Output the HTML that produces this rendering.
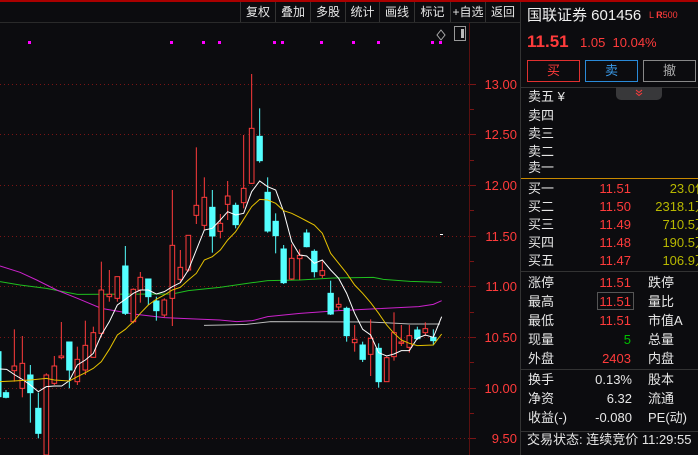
<!DOCTYPE html>
<html><head><meta charset="utf-8"><style>
*{margin:0;padding:0;box-sizing:border-box}
body{width:698px;height:455px;background:#0c0c0f;overflow:hidden;position:relative;font-family:"Liberation Sans","Noto Sans CJK SC",sans-serif;color:#e6e6e6}
.a{position:absolute;white-space:nowrap}
.tb{position:absolute;top:2px;height:20px;font-size:12px;line-height:20px;text-align:center;border-left:1px solid #333;color:#e6e6e6}
.r{font-size:13px;line-height:18px}
.red{color:#ff3b3b}.ol{color:#b8b800}
</style></head><body>
<div class="a" style="left:0;top:0;width:698px;height:2px;background:#a00"></div>
<div class="a" style="left:0;top:22px;width:520px;height:1px;background:#2a2a2a"></div>
<div class="tb" style="left:240px;width:35px">复权</div>
<div class="tb" style="left:275px;width:35px">叠加</div>
<div class="tb" style="left:310px;width:35px">多股</div>
<div class="tb" style="left:345px;width:34px">统计</div>
<div class="tb" style="left:379px;width:35px">画线</div>
<div class="tb" style="left:414px;width:36px">标记</div>
<div class="tb" style="left:450px;width:35px">+自选</div>
<div class="tb" style="left:485px;width:35px">返回</div>
<div class="a" style="left:520px;top:2px;width:1px;height:453px;background:#333"></div>

<svg class="a" style="left:0;top:0" width="520" height="455">
<g fill="#ff00ff"><rect x="28" y="41" width="3" height="3"/><rect x="170" y="41" width="3" height="3"/><rect x="202" y="41" width="3" height="3"/><rect x="218" y="41" width="3" height="3"/><rect x="273" y="41" width="3" height="3"/><rect x="281" y="41" width="3" height="3"/><rect x="320" y="41" width="3" height="3"/><rect x="352" y="41" width="3" height="3"/><rect x="377" y="41" width="3" height="3"/><rect x="431" y="41" width="3" height="3"/><rect x="439" y="41" width="3" height="3"/></g>
<path d="M441 30 L445 35 L441 40 L437 35 Z" fill="none" stroke="#aaa" stroke-width="1"/>
<rect x="454.5" y="26.5" width="11" height="14" fill="none" stroke="#999"/><rect x="461" y="29" width="3" height="9" fill="#bbb"/>
<line x1="469.5" y1="23" x2="469.5" y2="455" stroke="#5a1010"/>
<g stroke="#7a1515" stroke-dasharray="1,3">
<line x1="0" y1="84.5" x2="469" y2="84.5"/><line x1="0" y1="134.5" x2="469" y2="134.5"/><line x1="0" y1="185.5" x2="469" y2="185.5"/><line x1="0" y1="236.5" x2="469" y2="236.5"/><line x1="0" y1="286.5" x2="469" y2="286.5"/><line x1="0" y1="337.5" x2="469" y2="337.5"/><line x1="0" y1="388.5" x2="469" y2="388.5"/><line x1="0" y1="438.5" x2="469" y2="438.5"/></g>
<g stroke="#7a1515"><line x1="470" y1="84.5" x2="476" y2="84.5"/><line x1="470" y1="109.5" x2="474" y2="109.5"/><line x1="470" y1="134.5" x2="476" y2="134.5"/><line x1="470" y1="160.5" x2="474" y2="160.5"/><line x1="470" y1="185.5" x2="476" y2="185.5"/><line x1="470" y1="210.5" x2="474" y2="210.5"/><line x1="470" y1="236.5" x2="476" y2="236.5"/><line x1="470" y1="261.5" x2="474" y2="261.5"/><line x1="470" y1="286.5" x2="476" y2="286.5"/><line x1="470" y1="312.5" x2="474" y2="312.5"/><line x1="470" y1="337.5" x2="476" y2="337.5"/><line x1="470" y1="362.5" x2="474" y2="362.5"/><line x1="470" y1="388.5" x2="476" y2="388.5"/><line x1="470" y1="413.5" x2="474" y2="413.5"/><line x1="470" y1="438.5" x2="476" y2="438.5"/></g>
<g fill="#ff3b3b" font-size="13" font-family="Liberation Sans,sans-serif" text-anchor="end">
<text x="517" y="89">13.00</text><text x="517" y="139">12.50</text><text x="517" y="190">12.00</text><text x="517" y="241">11.50</text><text x="517" y="291">11.00</text><text x="517" y="342">10.50</text><text x="517" y="393">10.00</text><text x="517" y="443">9.50</text></g>
<rect x="440" y="234" width="3" height="1" fill="#fff"/>
<g transform="translate(0,60) scale(0.33333)">
<g fill="none" stroke-width="3">
<polyline stroke="#1fbf1f" points="0,665 60,675 139,685 232,703 517,702 565,692 659,682 757,668 803,662 900,660 1000,654 1120,652 1150,658 1230,664 1325,667"/>
<polyline stroke="#cc22cc" points="0,618 60,637 110,660 170,690 232,715 304,745 400,762 493,773 560,776 659,780 710,785 757,782 803,770 900,760 1016,752 1136,746 1256,740 1300,733 1325,722"/>
<polyline stroke="#bbb" points="612,796 670,795 740,793 812,785 1110,786 1230,792 1320,792"/>
</g>
<g stroke-width="3">
<g stroke="#54ffff" fill="#54ffff">
<rect x="-4" y="875" width="7" height="135"/>
<line x1="18" y1="990" x2="18" y2="1015"/><rect x="10" y="998" width="16" height="14"/>
<line x1="91" y1="915" x2="91" y2="1088"/><rect x="83" y="945" width="16" height="53"/>
<line x1="115" y1="998" x2="115" y2="1135"/><rect x="107" y="1045" width="16" height="75"/>
<line x1="208" y1="846" x2="208" y2="985"/><rect x="200" y="846" width="16" height="84"/>
<line x1="376" y1="558" x2="376" y2="765"/><rect x="368" y="618" width="16" height="142"/>
<line x1="445" y1="657" x2="445" y2="735"/><rect x="437" y="657" width="16" height="53"/>
<line x1="469" y1="710" x2="469" y2="782"/><rect x="461" y="723" width="16" height="29"/>
<line x1="637" y1="390" x2="637" y2="578"/><rect x="629" y="442" width="16" height="86"/>
<line x1="707" y1="428" x2="707" y2="505"/><rect x="699" y="436" width="16" height="58"/>
<line x1="779" y1="145" x2="779" y2="308"/><rect x="771" y="229" width="16" height="73"/>
<line x1="803" y1="352" x2="803" y2="518"/><rect x="795" y="397" width="16" height="116"/>
<line x1="827" y1="460" x2="827" y2="580"/><rect x="819" y="484" width="16" height="43"/>
<line x1="851" y1="555" x2="851" y2="672"/><rect x="843" y="567" width="16" height="101"/>
<line x1="920" y1="508" x2="920" y2="562"/><rect x="912" y="519" width="16" height="41"/>
<line x1="943" y1="568" x2="943" y2="652"/><rect x="935" y="574" width="16" height="61"/>
<line x1="992" y1="662" x2="992" y2="765"/><rect x="984" y="700" width="16" height="62"/>
<line x1="1040" y1="740" x2="1040" y2="845"/><rect x="1032" y="745" width="16" height="82"/>
<line x1="1088" y1="845" x2="1088" y2="906"/><rect x="1080" y="855" width="16" height="43"/>
<line x1="1136" y1="850" x2="1136" y2="983"/><rect x="1128" y="865" width="16" height="100"/>
<line x1="1252" y1="800" x2="1252" y2="840"/><rect x="1244" y="810" width="16" height="26"/>
<line x1="1300" y1="808" x2="1300" y2="855"/><rect x="1292" y="832" width="16" height="10"/>
</g>
<g stroke="#ff3b3b" fill="#0c0c0f">
<line x1="43" y1="808" x2="43" y2="965"/><rect x="36" y="918" width="14" height="14"/>
<line x1="67" y1="828" x2="67" y2="1012"/><rect x="60" y="910" width="14" height="75"/>
<line x1="139" y1="940" x2="139" y2="1185"/><rect x="132" y="945" width="14" height="240"/>
<line x1="163" y1="888" x2="163" y2="975"/><rect x="156" y="918" width="14" height="52"/>
<line x1="184" y1="786" x2="184" y2="898"/><rect x="177" y="888" width="14" height="5"/>
<line x1="232" y1="860" x2="232" y2="975"/><rect x="225" y="898" width="14" height="67"/>
<line x1="256" y1="782" x2="256" y2="945"/><rect x="249" y="856" width="14" height="74"/>
<line x1="280" y1="800" x2="280" y2="892"/><rect x="273" y="818" width="14" height="74"/>
<line x1="304" y1="605" x2="304" y2="832"/><rect x="297" y="690" width="14" height="130"/>
<line x1="328" y1="630" x2="328" y2="725"/><rect x="321" y="703" width="14" height="7"/>
<line x1="352" y1="650" x2="352" y2="725"/><rect x="345" y="650" width="14" height="65"/>
<line x1="400" y1="685" x2="400" y2="790"/><rect x="393" y="688" width="14" height="97"/>
<line x1="421" y1="636" x2="421" y2="728"/><rect x="414" y="652" width="14" height="38"/>
<line x1="493" y1="715" x2="493" y2="772"/><rect x="486" y="720" width="14" height="45"/>
<line x1="517" y1="390" x2="517" y2="798"/><rect x="510" y="556" width="14" height="159"/>
<line x1="541" y1="570" x2="541" y2="665"/><rect x="534" y="622" width="14" height="36"/>
<line x1="565" y1="526" x2="565" y2="635"/><rect x="558" y="526" width="14" height="104"/>
<line x1="589" y1="262" x2="589" y2="492"/><rect x="582" y="436" width="14" height="30"/>
<line x1="613" y1="352" x2="613" y2="510"/><rect x="606" y="412" width="14" height="84"/>
<line x1="661" y1="462" x2="661" y2="535"/><rect x="654" y="490" width="14" height="24"/>
<line x1="683" y1="363" x2="683" y2="480"/><rect x="676" y="408" width="14" height="25"/>
<line x1="731" y1="225" x2="731" y2="445"/><rect x="724" y="385" width="14" height="43"/>
<line x1="755" y1="42" x2="755" y2="372"/><rect x="748" y="205" width="14" height="165"/>
<line x1="875" y1="553" x2="875" y2="660"/><rect x="868" y="595" width="14" height="62"/>
<line x1="899" y1="568" x2="899" y2="660"/><rect x="892" y="586" width="14" height="10"/>
<line x1="967" y1="604" x2="967" y2="654"/><rect x="960" y="632" width="14" height="14"/>
<line x1="1016" y1="712" x2="1016" y2="750"/><rect x="1009" y="733" width="14" height="8"/>
<line x1="1064" y1="795" x2="1064" y2="875"/><rect x="1057" y="838" width="14" height="10"/>
<line x1="1112" y1="778" x2="1112" y2="948"/><rect x="1105" y="835" width="14" height="48"/>
<line x1="1160" y1="890" x2="1160" y2="965"/><rect x="1153" y="893" width="14" height="72"/>
<line x1="1182" y1="757" x2="1182" y2="902"/><rect x="1175" y="818" width="14" height="72"/>
<line x1="1204" y1="795" x2="1204" y2="858"/><rect x="1197" y="846" width="14" height="4"/>
<line x1="1228" y1="795" x2="1228" y2="878"/><rect x="1221" y="827" width="14" height="35"/>
<line x1="1276" y1="787" x2="1276" y2="828"/><rect x="1269" y="806" width="14" height="12"/>
</g></g>
<g fill="none" stroke-width="3">
<polyline stroke="#ffffff" points="0,927 20,928 45,945 70,960 91,975 115,995 139,980 163,978 185,978 208,962 232,915 256,900 280,880 304,825 328,785 352,735 376,718 400,700 421,690 445,690 469,702 493,695 517,680 541,668 565,630 589,570 613,510 637,505 661,480 683,455 707,465 731,460 755,395 779,363 803,380 827,390 851,455 875,545 899,585 920,588 943,610 967,600 992,630 1016,655 1040,700 1064,760 1088,808 1112,825 1136,878 1160,888 1182,882 1204,872 1228,872 1252,835 1276,825 1300,832 1325,770"/>
<polyline stroke="#e6c200" points="0,965 40,963 91,960 139,955 163,960 208,963 232,950 256,938 280,925 304,905 328,868 352,825 376,808 400,785 421,760 445,735 469,718 493,705 517,690 541,682 565,660 589,640 613,600 637,590 661,570 683,540 707,515 731,478 755,440 779,418 803,420 827,430 851,452 875,460 899,472 920,483 943,495 967,520 992,580 1016,610 1040,640 1064,675 1088,700 1112,728 1136,760 1160,795 1182,820 1204,840 1228,850 1252,857 1300,855 1325,822"/>
</g></g>
</svg>

<div class="a" style="left:527px;top:6px;font-size:15px;line-height:20px;color:#f0f0f0">国联证券 601456</div>
<div class="a" style="left:649px;top:10px;font-size:9px;color:#ff3b3b">L <b>R</b>500</div>
<div class="a" style="left:527px;top:32px;font-size:17px;font-weight:bold;line-height:20px;color:#ff3b3b">11.51</div>
<div class="a" style="left:580px;top:33px;font-size:13px;line-height:20px;color:#ff3b3b">1.05&nbsp; 10.04%</div>
<div class="a" style="left:527px;top:60px;width:53px;height:22px;border:1px solid #e03030;color:#ff3b3b;font-size:13px;text-align:center;line-height:20px">买</div>
<div class="a" style="left:585px;top:60px;width:53px;height:22px;border:1px solid #2a8ad8;color:#3a9ae8;font-size:13px;text-align:center;line-height:20px">卖</div>
<div class="a" style="left:643px;top:60px;width:53px;height:22px;border:1px solid #888;color:#aaa;font-size:13px;text-align:center;line-height:20px">撤</div>
<div class="a" style="left:521px;top:87px;width:177px;height:1px;background:#333"></div>
<div class="a" style="left:616px;top:87px;width:46px;height:13px;background:#38383a;border-radius:0 0 5px 5px"></div>
<svg class="a" style="left:634px;top:89px" width="10" height="8"><path d="M2 1 L5 3.5 L8 1 M2 4 L5 6.5 L8 4" fill="none" stroke="#ff3b3b" stroke-width="1"/></svg>
<div class="a r" style="left:528px;top:88px">卖五 ¥</div>
<div class="a r" style="left:528px;top:107px">卖四</div>
<div class="a r" style="left:528px;top:125px">卖三</div>
<div class="a r" style="left:528px;top:143px">卖二</div>
<div class="a r" style="left:528px;top:159px">卖一</div>
<div class="a" style="left:521px;top:178px;width:177px;height:1px;background:#c88a00"></div>
<div class="a r" style="left:528px;top:180px;line-height:18px">买一<br>买二<br>买三<br>买四<br>买五</div>
<div class="a r red" style="left:590px;top:180px;width:41px;text-align:right">11.51<br>11.50<br>11.49<br>11.48<br>11.47</div>
<div class="a r ol" style="left:628px;top:180px;width:80px;text-align:right">23.0亿<br>2318.1万<br>710.5万<br>190.5万<br>106.9万</div>
<div class="a" style="left:521px;top:271px;width:177px;height:1px;background:#333"></div>
<div class="a r" style="left:528px;top:273px;line-height:19px">涨停<br>最高<br>最低<br>现量<br>外盘</div>
<div class="a r" style="left:590px;top:273px;width:41px;text-align:right;line-height:19px"><span class="red">11.51</span><br><span class="red">11.51</span><br><span class="red">11.51</span><br><span style="color:#00c000">5</span><br><span class="red">2403</span></div>
<div class="a" style="left:597px;top:292px;width:37px;height:18px;border:1px solid #555"></div>
<div class="a r" style="left:648px;top:273px;line-height:19px">跌停<br>量比<br>市值A<br>总量<br>内盘</div>
<div class="a" style="left:521px;top:369px;width:177px;height:1px;background:#333"></div>
<div class="a r" style="left:528px;top:370px;line-height:19px">换手<br>净资<br>收益(-)</div>
<div class="a r" style="left:580px;top:370px;width:52px;text-align:right;line-height:19px">0.13%<br>6.32<br>-0.080</div>
<div class="a r" style="left:648px;top:370px;line-height:19px">股本<br>流通<br>PE(动)</div>
<div class="a" style="left:521px;top:431px;width:177px;height:1px;background:#333"></div>
<div class="a r" style="left:527px;top:431px">交易状态: 连续竞价 11:29:55</div>
</body></html>
